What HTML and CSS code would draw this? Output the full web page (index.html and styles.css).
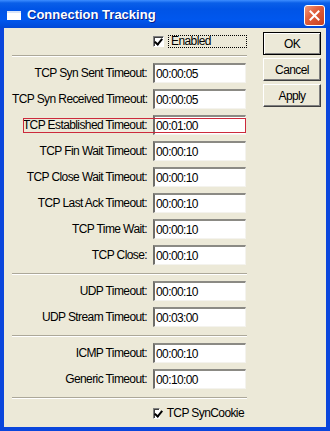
FILE: index.html
```html
<!DOCTYPE html>
<html lang="en">
<head>
    <meta charset="UTF-8">
    <title>Connection Tracking</title>
    <link rel="stylesheet" href="styles.css">
</head>
<body>

    <div class="window">
        <div class="titlebar">
            <svg class="app-icon" width="16" height="12" viewBox="0 0 16 12">
                <rect x="1" y="2" width="14" height="9" fill="#ffffff"/>
                <rect x="1" y="2" width="14" height="2" fill="#d8e4f8"/>
            </svg>
            <span class="title">Connection Tracking</span>
            <div class="close">
                <svg width="11" height="11" viewBox="0 0 11 11">
                    <path d="M1.5 1.5 L9.5 9.5 M9.5 1.5 L1.5 9.5" stroke="#ffffff" stroke-width="2" stroke-linecap="square"/>
                </svg>
            </div>
        </div>

        <div class="client">
            <div class="form">
                <div class="check-row">
                    <span class="checkbox checked"></span>
                    <span class="check-label focused">Enabled</span>
                </div>
                <div class="separator"></div>

                <div class="group">
                    <div class="row"><label>TCP Syn Sent Timeout:</label><input type="text" value="00:00:05"></div>
                    <div class="row"><label>TCP Syn Received Timeout:</label><input type="text" value="00:00:05"></div>
                    <div class="row marked"><label>TCP Established Timeout:</label><input type="text" value="00:01:00"><span class="mark"></span></div>
                    <div class="row"><label>TCP Fin Wait Timeout:</label><input type="text" value="00:00:10"></div>
                    <div class="row"><label>TCP Close Wait Timeout:</label><input type="text" value="00:00:10"></div>
                    <div class="row"><label>TCP Last Ack Timeout:</label><input type="text" value="00:00:10"></div>
                    <div class="row"><label>TCP Time Wait:</label><input type="text" value="00:00:10"></div>
                    <div class="row"><label>TCP Close:</label><input type="text" value="00:00:10"></div>
                </div>
                <div class="separator"></div>

                <div class="group">
                    <div class="row"><label>UDP Timeout:</label><input type="text" value="00:00:10"></div>
                    <div class="row"><label>UDP Stream Timeout:</label><input type="text" value="00:03:00"></div>
                </div>
                <div class="separator"></div>

                <div class="group">
                    <div class="row"><label>ICMP Timeout:</label><input type="text" value="00:00:10"></div>
                    <div class="row"><label>Generic Timeout:</label><input type="text" value="00:10:00"></div>
                </div>
                <div class="separator"></div>

                <div class="check-row bottom">
                    <span class="checkbox checked"></span>
                    <span class="check-label">TCP SynCookie</span>
                </div>
            </div>

            <div class="buttons">
                <button class="default">OK</button>
                <button>Cancel</button>
                <button>Apply</button>
            </div>
        </div>
    </div>

</body>
</html>
```

FILE: styles.css
```css
body {
    margin: 0;
    font-family: "Liberation Sans", Arial, sans-serif;
    font-size: 12px;
    letter-spacing: -0.6px;
}
.window {
    width: 330px;
    height: 431px;
    background: #0a46dc;
    display: flex;
    flex-direction: column;
}
.titlebar {
    height: 30px;
    display: flex;
    align-items: center;
    background: linear-gradient(#3d8dff 0, #0a5fe8 3px, #0054e6 9px, #0057ee 20px, #004ad9 27px, #0a3fd0 30px);
}
.app-icon {
    margin-left: 6px;
    margin-top: 2px;
}
.title {
    margin-left: 5px;
    color: white;
    font-weight: bold;
    font-size: 13px;
    letter-spacing: 0;
    text-shadow: 1px 1px #0a1f8a;
    flex: 1;
}
.close {
    width: 21px;
    height: 21px;
    margin-right: 5px;
    margin-top: 2px;
    box-sizing: border-box;
    border: 1px solid white;
    border-radius: 3px;
    background: linear-gradient(135deg, #ef9a7c 0%, #e0603e 40%, #c7401f 100%);
    display: flex;
    align-items: center;
    justify-content: center;
}
.client {
    flex: 1;
    margin: 0 4px 4px 4px;
    background: #ece9d8;
    display: flex;
    padding-left: 8px;
}
.form {
    width: 235px;
}
.check-row {
    height: 27px;
    display: flex;
    align-items: center;
    padding-left: 141px;
}
.check-row.bottom {
    height: 28px;
}
.checkbox {
    width: 11px;
    height: 11px;
    box-sizing: border-box;
    border: 1px solid;
    border-color: #808080 #ffffff #ffffff #808080;
    box-shadow: inset 1px 1px #404040;
    background: white;
    margin-right: 4px;
    position: relative;
}
.checkbox.checked::after {
    content: "";
    position: absolute;
    left: 2px;
    top: 0px;
    width: 3px;
    height: 6px;
    border: solid black;
    border-width: 0 2px 2px 0;
    transform: rotate(40deg);
}
.check-label {
    padding: 0 2px;
    line-height: 11px;
    border: 1px solid transparent;
    white-space: nowrap;
}
.check-label.focused {
    flex: 1;
    border: 1px dotted #000;
}
.separator {
    border-top: 1px solid #aca899;
    border-bottom: 1px solid #ffffff;
}
.group {
    padding: 6px 0 8px;
    display: flex;
    flex-direction: column;
    gap: 6px;
}
.row {
    display: flex;
    align-items: center;
    height: 20px;
    position: relative;
}
.row label {
    width: 135px;
    text-align: right;
    margin-right: 6px;
    white-space: nowrap;
}
.row input {
    width: 93px;
    height: 20px;
    box-sizing: border-box;
    margin: 0;
    padding: 0 0 0 1px;
    font: inherit;
    letter-spacing: inherit;
    color: black;
    background: white;
    border: 1px solid;
    border-width: 2px 1px 1px 2px;
    border-color: #8b8a84 #f4f3ee #f4f3ee #6f6e6a;
    outline: none;
}
.mark {
    position: absolute;
    left: 11px;
    top: 3px;
    width: 223px;
    height: 15px;
    box-sizing: border-box;
    border: 1px solid #cc2a3c;
}
.buttons {
    margin-left: 16px;
    padding-top: 4px;
    display: flex;
    flex-direction: column;
    gap: 3px;
}
.buttons button {
    width: 58px;
    height: 23px;
    padding: 0;
    font: inherit;
    letter-spacing: inherit;
    color: black;
    background: #ece9d8;
    border: 1px solid;
    border-color: #ffffff #404040 #404040 #ffffff;
    box-shadow: inset -1px -1px #808080;
}
.buttons button.default {
    border-color: #000;
    box-shadow: inset 1px 1px #ffffff, inset -1px -1px #808080;
}
```
